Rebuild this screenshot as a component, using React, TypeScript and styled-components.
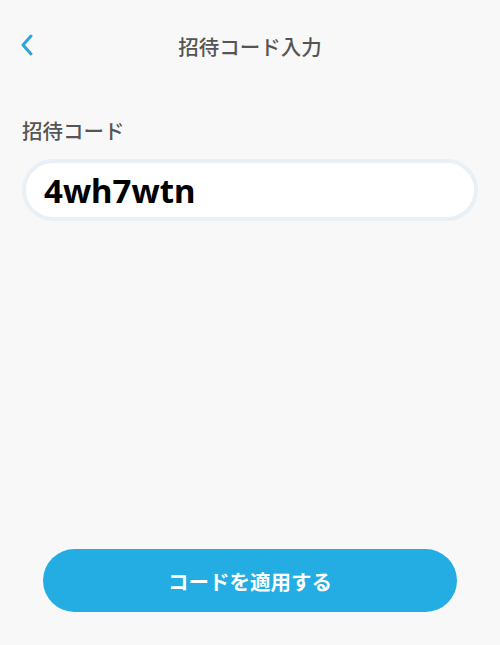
import React from 'react';
import styled, { createGlobalStyle } from 'styled-components';

const GlobalStyle = createGlobalStyle`
  html, body {
    margin: 0;
    padding: 0;
    background: #f8f8f8;
  }
  body {
    font-family: "Noto Sans CJK JP", "Noto Sans", sans-serif;
  }
`;

const Page = styled.div`
  height: 645px;
  display: flex;
  flex-direction: column;
  background: #f8f8f8;
`;

const Header = styled.header`
  position: relative;
  height: 92px;
  display: flex;
  align-items: center;
  justify-content: center;
`;

const BackButton = styled.button`
  position: absolute;
  left: 14px;
  top: 30px;
  width: 26px;
  height: 30px;
  padding: 0;
  border: 0;
  background: none;
  display: flex;
  align-items: center;
  justify-content: center;
`;

const Title = styled.h1`
  margin: 0;
  font-size: 20.5px;
  font-weight: 500;
  color: #555555;
`;

const Form = styled.div`
  flex: 1;
  padding: 22px 22px 0 22px;
  display: flex;
  flex-direction: column;
`;

const Label = styled.label`
  font-size: 20.5px;
  font-weight: 500;
  color: #555555;
  line-height: 32px;
`;

const CodeInput = styled.input`
  margin-top: 13px;
  height: 62px;
  box-sizing: border-box;
  border: 4px solid #e9f0f6;
  border-radius: 31px;
  background: #ffffff;
  padding: 0 18px;
  font-family: "Noto Sans", "Liberation Sans", sans-serif;
  font-size: 33px;
  font-weight: 700;
  color: #000000;
  outline: none;
`;

const Footer = styled.div`
  padding: 0 43px 33px 43px;
`;

const ApplyButton = styled.button`
  width: 100%;
  height: 63px;
  border: 0;
  border-radius: 32px;
  background: #23ade3;
  color: #ffffff;
  font-family: "Noto Sans CJK JP", "Noto Sans", sans-serif;
  font-size: 20.5px;
  font-weight: 700;
`;

const ChevronLeft = () => (
  <svg width="16" height="22" viewBox="0 0 16 22" fill="none">
    <path d="M12 2 L4 11 L12 20" stroke="#2ba6dc" strokeWidth="3" strokeLinecap="round" strokeLinejoin="round" />
  </svg>
);

const App = () => {
  const [code, setCode] = React.useState('4wh7wtn');
  return (
    <Page>
      <GlobalStyle />
      <Header>
        <BackButton aria-label="戻る">
          <ChevronLeft />
        </BackButton>
        <Title>招待コード入力</Title>
      </Header>
      <Form>
        <Label htmlFor="invite">招待コード</Label>
        <CodeInput id="invite" value={code} onChange={(e) => setCode(e.target.value)} />
      </Form>
      <Footer>
        <ApplyButton>コードを適用する</ApplyButton>
      </Footer>
    </Page>
  );
};

export default App;
